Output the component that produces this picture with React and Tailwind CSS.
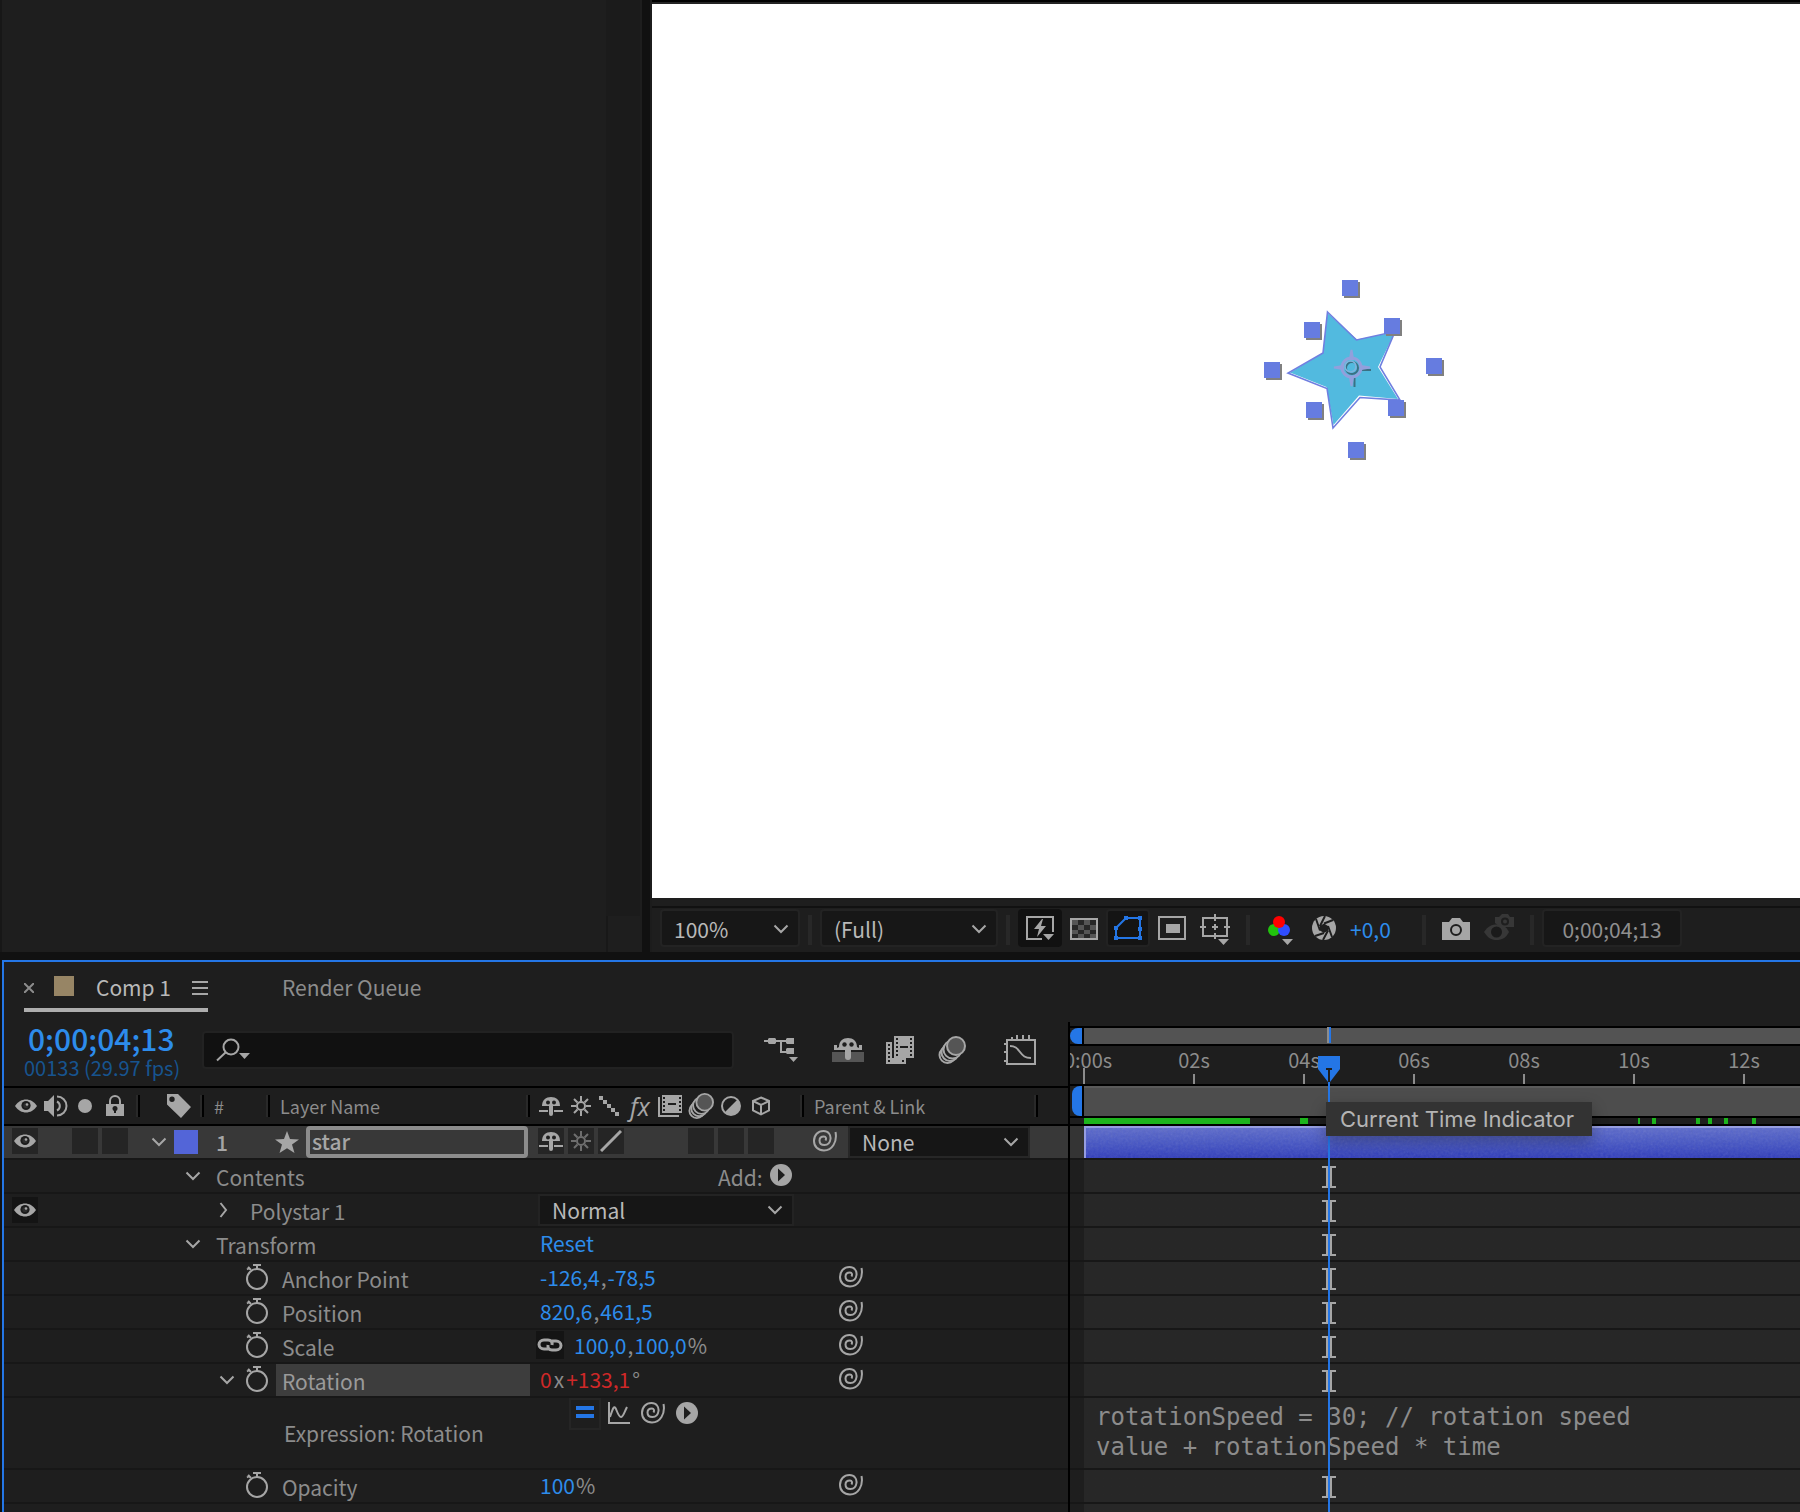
import React, {useState} from "react";

const handles = [
	[1342, 280], [1304, 322], [1384, 318], [1264, 362],
	[1426, 358], [1306, 402], [1388, 400], [1348, 442],
];

// cached frames on the timeline, [start, width]
const cachedFrames = [
	[0, 166], [216, 8], [554, 2], [568, 4], [612, 4], [624, 4], [640, 4], [668, 4],
];

const rulerLabels = ["0:00s", "02s", "04s", "06s", "08s", "10s", "12s"];

const Icon = ({w, h, className = "", children}) => (
	<svg width={w} height={h} viewBox={`0 0 ${w} ${h}`} fill="none" className={`shrink-0 ${className}`} aria-hidden="true">
		{children}
	</svg>
);

const ChevronDown = ({className = ""}) => (
	<Icon w={16} h={10} className={className}>
		<path d="M1.500 1.500 8 8l6.500-6.500" stroke="currentColor" strokeWidth="2"/>
	</Icon>
);

const ChevronRight = () => (
	<Icon w={10} h={16}>
		<path d="M1.500 1 7 8l-5.500 7" stroke="currentColor" strokeWidth="2"/>
	</Icon>
);

const Eye = () => (
	<Icon w={22} h={16}>
		<path d="M0 8C3 3.500 7 1.500 11 1.500S19 3.500 22 8c-3 4.500-7 6.500-11 6.500S3 12.500 0 8Z" fill="currentColor"/>
		<circle cx="11" cy="7.500" r="4.600" fill="#1c1c1c"/>
		<circle cx="11" cy="7.500" r="2.600" fill="#2e2e2e"/>
		<circle cx="12" cy="6.500" r="1.300" fill="currentColor"/>
	</Icon>
);

const Speaker = () => (
	<Icon w={24} h={24}>
		<path d="M0 7h4l6-6v22l-6-6H0Z" fill="currentColor"/>
		<path d="M13 2.500a9.500 9.500 0 0 1 0 19M13 7.500a5 5 0 0 1 0 9" stroke="currentColor" strokeWidth="2"/>
	</Icon>
);

const Lock = () => (
	<Icon w={18} h={22}>
		<path d="M4 10V6a5 5 0 0 1 10 0v4" stroke="currentColor" strokeWidth="2"/>
		<path d="M0 9h18v12H0Z" fill="currentColor"/>
		<circle cx="9" cy="13.500" r="2.500" fill="#1e1e1e"/>
		<path d="M8 14h2v4H8Z" fill="#1e1e1e"/>
	</Icon>
);

const Tag = () => (
	<Icon w={24} h={24}>
		<path fillRule="evenodd" d="M0 0h11l13 13-10 11L0 10.500ZM5 2.500a2.700 2.700 0 1 0 0 5.400 2.700 2.700 0 0 0 0-5.400Z" fill="currentColor"/>
	</Icon>
);

const Shy = () => (
	<Icon w={24} h={20}>
		<path d="M3 10C3 4 7 1 12 1s9 3 9 9Z" fill="currentColor"/>
		<circle cx="9" cy="6.500" r="2" fill="#1e1e1e"/>
		<circle cx="15" cy="6.500" r="2" fill="#1e1e1e"/>
		<path d="M10 9h4v9a2 2 0 0 1-4 0ZM0 14h9v2H0ZM15 14h9v2h-9Z" fill="currentColor"/>
	</Icon>
);

const Sun = () => (
	<Icon w={20} h={20}>
		<circle cx="10" cy="10" r="4" stroke="currentColor" strokeWidth="2"/>
		<path d="M10 0v5M10 15v5M0 10h5M15 10h5M3 3l3.500 3.500M13.500 13.500 17 17M17 3l-3.500 3.500M6.500 13.500 3 17" stroke="currentColor" strokeWidth="2"/>
	</Icon>
);

const Dots = () => (
	<Icon w={20} h={20}>
		<path d="M0 0h4v4H0ZM4 4h4v4H4ZM8 8h4v4H8ZM12 12h4v4h-4ZM16 16h4v4h-4Z" fill="currentColor"/>
	</Icon>
);

const FilmStack = () => (
	<Icon w={24} h={22}>
		<path d="M1 2v19h20" stroke="currentColor" strokeWidth="2"/>
		<path d="M4 0h20v18H4Z" fill="currentColor"/>
		<path d="M5 2h2v2H5ZM5 6h2v2H5ZM5 10h2v2H5ZM5 14h2v2H5ZM21 2h2v2h-2ZM21 6h2v2h-2ZM21 10h2v2h-2ZM21 14h2v2h-2ZM10 8h8v2h-8Z" fill="#1e1e1e"/>
	</Icon>
);

const MotionBlur = ({size = 28}) => (
	<svg width={size} height={size} viewBox="0 0 28 28" fill="none" className="shrink-0" aria-hidden="true">
		<circle cx="9.500" cy="19" r="8" fill="#1e1e1e" stroke="currentColor" strokeWidth="2"/>
		<circle cx="12" cy="16.500" r="8.500" fill="#1e1e1e" stroke="currentColor" strokeWidth="2"/>
		<circle cx="14.500" cy="13.500" r="9" fill="#1e1e1e" stroke="currentColor" strokeWidth="2"/>
		<circle cx="18" cy="10" r="9" fill="#555" stroke="currentColor" strokeWidth="2"/>
	</svg>
);

const HalfCircle = () => (
	<Icon w={22} h={22}>
		<circle cx="11" cy="11" r="9" stroke="currentColor" strokeWidth="2"/>
		<path d="M17.500 4.500A9.200 9.200 0 0 1 4.500 17.500Z" fill="currentColor"/>
	</Icon>
);

const Cube = () => (
	<Icon w={20} h={20}>
		<path d="m10 1.500 8 3.500v9.500L10 18.500 2 14.500V5ZM2 5l8 4 8-4M10 9v9.500" stroke="currentColor" strokeWidth="2"/>
	</Icon>
);

const Spiral = () => (
	<Icon w={24} h={22}>
		<path
			d="M22.500 2C24.500 12 19 20.500 11 20.500 5 20.500 1 16.500 1 11 1 5 5 1 10.500 1 15.500 1 18 5 17.500 9c-.500 4-3 6-6 6-3.500 0-5-2-5-4.500S8.500 6.500 11 6.500c2 0 2.500 2 1.500 4"
			stroke="currentColor" strokeWidth="2"
		/>
	</Icon>
);

const Play = () => (
	<Icon w={22} h={22}>
		<circle cx="11" cy="11" r="11" fill="currentColor"/>
		<path d="m8 4.500 7 6.500-7 6.500Z" fill="#1e1e1e"/>
	</Icon>
);

const Stopwatch = () => (
	<Icon w={22} h={26}>
		<circle cx="11" cy="15" r="10" stroke="currentColor" strokeWidth="2"/>
		<path d="M7 1h8M11 1v4M1 5.500 4 3.500M2 3l3 3" stroke="currentColor" strokeWidth="2"/>
	</Icon>
);

const StarGlyph = () => (
	<Icon w={24} h={22}>
		<path d="m12 0 3 8 9 .400-7 5.200L19.500 22 12 17.200 4.500 22 7 13.600 0 8.400 9 8Z" fill="currentColor"/>
	</Icon>
);

const ChainLink = () => (
	<Icon w={26} h={16}>
		<path d="M12 12H7a5 4.500 0 0 1 0-9h4c3 0 4.500 2 4 5M14 4h5a5 4.500 0 0 1 0 9h-4c-3 0-4.500-2-4-5" stroke="currentColor" strokeWidth="3"/>
	</Icon>
);

const Triangle = ({x, y}) => <path d={`M${x} ${y}h11l-5.500 6Z`} fill="currentColor"/>;

const Divider = () => <div className="h-[30px] w-1 shrink-0 bg-[#282828]"/>;

const HeaderDivider = () => <div className="h-[22px] w-[4px] shrink-0 border-r-2 border-l-2 border-l-[#292929] border-r-black"/>;

const Cell = ({label, className = "bg-[#252525]", children}) => (
	<button type="button" aria-label={label} className={`flex h-[26px] w-[26px] shrink-0 items-center justify-center ${className}`}>
		{children}
	</button>
);

const Select = ({label, options, className, text, chevron}) => (
	<div className={`relative shrink-0 ${className}`}>
		<select aria-label={label} className={`h-full w-full appearance-none bg-transparent pl-3 leading-[28px] text-[#b9b9b9] outline-none ${text}`}>
			{options.map((option) => <option key={option}>{option}</option>)}
		</select>
		<ChevronDown className={`pointer-events-none absolute ${chevron}`}/>
	</div>
);

const HotText = ({children}) => <button type="button" className="text-[#2d8ceb]">{children}</button>;

const Unit = ({children}) => <span className="px-px">{children}</span>;

const PickWhip = () => (
	<button type="button" aria-label="Expression pick whip" className="mb-[2px]">
		<Spiral/>
	</button>
);

const Row = ({toggle, name, value, link, tall}) => (
	<div className={`flex border-b-2 border-[#171717] ${tall ? "h-[72px]" : "h-[34px]"}`}>
		<div className="flex w-[134px] shrink-0 items-center pl-2">{toggle}</div>
		<div className="flex w-[396px] shrink-0 items-center">{name}</div>
		<div className="flex w-[268px] shrink-0 items-center pl-[6px]">{value}</div>
		<div className="flex flex-1 items-center pl-[37px]">{link}</div>
	</div>
);

const GroupName = ({children}) => (
	<div className="flex items-center pl-[47px]">
		<ChevronDown/>
		<span className="pt-[2px] pl-[15px]">{children}</span>
	</div>
);

const PropertyName = ({children, open, selected}) => (
	<div className="flex h-full w-full items-center pr-[4px] pl-[81px]">
		<span className="w-[27px] shrink-0">{open && <ChevronDown/>}</span>
		<button type="button" aria-label={`Animate ${children}`} className="mr-2 mb-[2px] shrink-0">
			<Stopwatch/>
		</button>
		<span className={`flex h-full flex-1 items-center pt-[2px] pl-[6px] ${selected ? "bg-[#3d3d3d] text-[#9a9a9a]" : ""}`}>{children}</span>
	</div>
);

const Viewer = () => (
	<section aria-label="Composition" className="flex min-w-0 flex-1 flex-col border-l-2 border-[#1c1c1c]">
		<div className="h-1 shrink-0 border-b-2 border-[#232323] bg-black"/>
		<div className="min-h-0 flex-1 overflow-hidden bg-white">
			<svg width="1148" height="894" viewBox="652 4 1148 894" role="img" aria-label="star">
				<path
					d="M1327.500 313 1357 339.500 1395 332 1378 367 1398 399 1359 395.500 1333.500 425 1326.500 387 1290 372.500 1323 353Z"
					fill="#52badf"
				/>
				<path
					d="M1327.500 312 1356.500 340 1395 331.500 1380 367 1400 400 1360 397.500 1333 428 1327 388.500 1288 373 1323 353Z"
					stroke="#6f7fe0" strokeWidth="1.600" fill="none"
				/>
				<g fill="none" stroke="#35606e" strokeWidth="2" opacity=".800">
					<circle cx="1352" cy="368" r="6"/>
					<path d="M1361 370h10M1354.500 378v9"/>
				</g>
				<g fill="none" stroke="#92a0dc">
					<circle cx="1351.500" cy="367.500" r="9.500" strokeWidth="3"/>
					<circle cx="1350.500" cy="366.500" r="5.500" strokeWidth="1.500" stroke="#7fb4dc"/>
				</g>
				<path d="M1350 359l1.500-9 1.500 9ZM1350 377l1.500 9 1.500-9ZM1343 366l-9 1.500 9 1.500ZM1361 366l9 1.500-9 1.500Z" fill="#92a0dc" stroke="#92a0dc" strokeWidth="2"/>
				{handles.map(([x, y]) => (
					<g key={`${x}-${y}`}>
						<rect x={x + 2} y={y + 2} width="16" height="16" fill="#808080"/>
						<rect x={x} y={y} width="16" height="16" fill="#667ce0"/>
					</g>
				))}
			</svg>
		</div>
		<div className="mt-2 flex h-[46px] shrink-0 items-center border-t-2 border-[#111] pl-2 text-[#a6a6a6]">
			<Select label="Magnification" options={["100%"]} text="pt-[2px]" className="mb-1 h-[38px] w-[140px] rounded border-2 border-[#232323] bg-[#171717]" chevron="top-[13px] right-[9px]"/>
			<div className="flex w-5 justify-center"><Divider/></div>
			<Select label="Resolution" options={["(Full)"]} text="pt-[2px]" className="mb-1 h-[38px] w-[178px] rounded border-2 border-[#232323] bg-[#171717]" chevron="top-[13px] right-[9px]"/>
			<div className="flex w-5 justify-center"><Divider/></div>
			<button type="button" aria-label="Fast previews" className="mb-1 flex h-[38px] w-[44px] items-center justify-center rounded bg-[#111]">
				<Icon w={28} h={26}>
					<path d="M16 24H1V2h26v15" stroke="currentColor" strokeWidth="2"/>
					<path d="m16 4-8 10h5l-2 8 9-11h-5l2-7Z" fill="currentColor"/>
					<Triangle x={17} y={19}/>
				</Icon>
			</button>
			<button type="button" aria-label="Toggle transparency grid" className="mb-[2px] ml-2">
				<Icon w={28} h={22}>
					<path d="M1 1h26v20H1Z" fill="#555" stroke="currentColor" strokeWidth="2"/>
					<path d="M8 2h6v5H8ZM20 2h6v5h-6ZM2 7h6v5H2ZM14 7h6v5h-6ZM8 12h6v4H8ZM20 12h6v4h-6ZM2 16h6v4H2ZM14 16h6v4h-6Z" fill="#272727"/>
				</Icon>
			</button>
			<button type="button" aria-label="Toggle mask and shape path visibility" className="mb-1 ml-2 flex h-[38px] w-[44px] items-center justify-center rounded border-2 border-[#222] bg-[#141414] text-[#2476e6]">
				<Icon w={28} h={26}>
					<path d="M12 3h14v20H2V13Z" stroke="currentColor" strokeWidth="2"/>
					<path d="M10 1h4v4h-4ZM24 1h4v4h-4ZM0 11h4v4H0ZM24 12h4v4h-4ZM0 21h4v4H0ZM24 21h4v4h-4Z" fill="currentColor"/>
				</Icon>
			</button>
			<button type="button" aria-label="Region of interest" className="mb-1 ml-2">
				<Icon w={28} h={24}>
					<path d="M1 1h26v22H1Z" stroke="currentColor" strokeWidth="2"/>
					<path d="M8 8h14v9H8Z" fill="currentColor"/>
				</Icon>
			</button>
			<button type="button" aria-label="Grid and guide options" className="ml-[14px]">
				<Icon w={30} h={32}>
					<path d="M3 4h24v18H3ZM15 0v7M15 19v6M0 13h6M24 13h6M12 13h6M15 10v6" stroke="currentColor" strokeWidth="2"/>
					<Triangle x={18} y={25}/>
				</Icon>
			</button>
			<div className="mx-4"><Divider/></div>
			<button type="button" aria-label="Show channel" className="ml-[2px]">
				<Icon w={26} h={30}>
					<circle cx="6" cy="15" r="6" fill="#21c20d"/>
					<circle cx="16" cy="15" r="6" fill="#2f4dff"/>
					<circle cx="11" cy="7" r="6" fill="#f00"/>
					<Triangle x={14} y={24}/>
				</Icon>
			</button>
			<button type="button" aria-label="Reset exposure" className="mb-1 ml-[18px]">
				<Icon w={24} h={24}>
					<circle cx="12" cy="12" r="12" fill="currentColor"/>
					<path d="M12 7.500 16 10v4.500L12 17l-4-2.500V10Z" fill="#1e1e1e"/>
					<path d="M12 7.500 21 4M16 10l4 11M16 14.500 11 24M12 17l-9 3M8 14.500 4 3M8 10l5-10" stroke="#1e1e1e" strokeWidth="2"/>
				</Icon>
			</button>
			<div className="mb-[2px] ml-[14px] w-[72px]"><HotText>+0,0</HotText></div>
			<Divider/>
			<button type="button" aria-label="Take snapshot" className="mb-[2px] ml-4">
				<Icon w={28} h={22}>
					<path d="M0 4h7l3-4h8l3 4h7v18H0Z" fill="currentColor"/>
					<circle cx="14" cy="12" r="5" stroke="#1e1e1e" strokeWidth="2"/>
				</Icon>
			</button>
			<button type="button" aria-label="Show snapshot" className="mb-1 ml-[14px] text-[#373737]">
				<Icon w={30} h={28}>
					<path d="M0 18c4-6 8-7.500 13-7.500S22 12 25 18c-3 6-7 8-12.500 8S4 24 0 18Z" fill="currentColor"/>
					<path d="M11 3h4l3-3h6l2 3h4v10H16l-5-4Z" fill="currentColor"/>
					<circle cx="12.500" cy="18" r="5.500" fill="#1a1a1a"/>
					<circle cx="21" cy="7.500" r="3" stroke="#1e1e1e" strokeWidth="2"/>
				</Icon>
			</button>
			<div className="mr-2 ml-4"><Divider/></div>
			<button type="button" className="mb-1 h-[38px] w-[140px] rounded border-2 border-[#232323] bg-[#171717] pt-[2px] text-[#8f8f8f]">0;00;04;13</button>
		</div>
	</section>
);

const Outline = () => {
	const [layerName, setLayerName] = useState("star");

	return (
		<div className="w-[1064px] shrink-0">
			<div className="flex h-[66px] items-start border-b-2 border-black pl-5">
				<div className="flex w-[178px] flex-col items-start pt-px">
					<button type="button" className="pl-1 text-[30px] leading-[30px] font-medium text-[#2d8ceb]">0;00;04;13</button>
					<span className="text-[20px] leading-[30px] text-[#17548f]">00133 (29.97 fps)</span>
				</div>
				<label className="mt-[9px] flex h-[38px] w-[532px] items-center rounded border-2 border-[#222] bg-[#111] pl-3 text-[#a6a6a6]">
					<Icon w={34} h={24}>
						<circle cx="15" cy="9" r="7.500" stroke="currentColor" strokeWidth="2"/>
						<path d="M9.500 14.500 1 22.500" stroke="currentColor" strokeWidth="2"/>
						<Triangle x={23} y={15}/>
					</Icon>
					<input type="search" aria-label="Search layers" className="min-w-0 flex-1 bg-transparent outline-none"/>
				</label>
				<div className="mt-[13px] flex items-center text-[#a6a6a6]">
					<button type="button" aria-label="Composition mini-flowchart" className="ml-[30px]">
						<Icon w={34} h={26}>
							<path d="M0 4h24M17 4v11h6" stroke="currentColor" strokeWidth="2"/>
							<path d="M5 1h6l1 1v4l-1 1H5L4 6V2ZM23 1h7v6h-7l-1-1V2ZM23 11h7v6h-7l-1-1v-4Z" fill="currentColor"/>
							<path d="M25 20h9l-4.500 5Z" fill="currentColor"/>
						</Icon>
					</button>
					<button type="button" aria-label="Hide shy layers" className="ml-[34px]">
						<Icon w={32} h={26}>
							<path d="M0 15h32v10H0Z" fill="#555"/>
							<path d="M7 10C7 4 11 1 16 1s9 3 9 9l2 1V8h3v5H2V8h3v3Z" fill="currentColor"/>
							<circle cx="12.500" cy="7.500" r="2.200" fill="#1e1e1e"/>
							<circle cx="19.500" cy="7.500" r="2.200" fill="#1e1e1e"/>
							<path d="M13 12h6v8a3 3 0 0 1-6 0Z" fill="currentColor"/>
						</Icon>
					</button>
					<button type="button" aria-label="Frame blending" className="ml-[22px]">
						<Icon w={28} h={28}>
							<path d="M0 6h6v16h14v6H0Z" fill="currentColor"/>
							<path d="M8 0h20v22H8Z" fill="currentColor"/>
							<path d="M10 2h2v2h-2ZM10 6h2v2h-2ZM10 10h2v2h-2ZM10 14h2v2h-2ZM10 18h2v2h-2ZM24 2h2v2h-2ZM24 6h2v2h-2ZM24 10h2v2h-2ZM24 14h2v2h-2ZM24 18h2v2h-2ZM14 10h8v2h-8ZM2 8h2v2H2ZM2 12h2v2H2ZM2 16h2v2H2ZM2 20h2v2H2ZM2 24h2v2H2ZM16 24h2v2h-2Z" fill="#1e1e1e"/>
						</Icon>
					</button>
					<button type="button" aria-label="Motion blur" className="ml-[24px]"><MotionBlur/></button>
					<button type="button" aria-label="Graph editor" className="ml-[38px]">
						<Icon w={32} h={30}>
							<path d="M3 5h28v24H3ZM8 2v3M13 0v5M19 0v5M25 0v5M0 9h3M0 17h3M0 26h3" stroke="currentColor" strokeWidth="2"/>
							<path d="M6 11c5 0 7 2 10 6s5 6 11 6" stroke="currentColor" strokeWidth="2"/>
						</Icon>
					</button>
				</div>
			</div>

			<div className="flex h-[38px] items-center border-b-2 border-black text-[18px] text-[#8c8c8c]">
				<div className="flex w-[132px] shrink-0 items-center pl-[11px] text-[#a6a6a6]">
					<Eye/>
					<span className="ml-[7px]"><Speaker/></span>
					<span className="ml-[10px] h-[14px] w-[14px] rounded-full bg-[#a6a6a6]"/>
					<span className="ml-[14px]"><Lock/></span>
				</div>
				<HeaderDivider/>
				<div className="w-[60px] pl-[27px] text-[#a6a6a6]"><Tag/></div>
				<HeaderDivider/>
				<div className="w-[62px] pl-[10px]">#</div>
				<HeaderDivider/>
				<div className="w-[256px] pl-[10px]">Layer Name</div>
				<HeaderDivider/>
				<div className="flex w-[270px] items-center pl-[9px] text-[#a6a6a6]">
					<Shy/>
					<span className="ml-2"><Sun/></span>
					<span className="ml-2"><Dots/></span>
					<span className="ml-[11px] w-[22px] font-['Open_Sans',sans-serif] text-[25px] leading-[30px] italic">fx</span>
					<span className="ml-[6px]"><FilmStack/></span>
					<span className="ml-[6px]"><MotionBlur size={26}/></span>
					<span className="ml-[6px]"><HalfCircle/></span>
					<span className="ml-[9px]"><Cube/></span>
				</div>
				<HeaderDivider/>
				<div className="w-[230px] pl-[10px]">Parent &amp; Link</div>
				<HeaderDivider/>
			</div>

			<div className="flex h-[34px] border-b-2 border-[#171717] bg-[#383838] text-[#a6a6a6]">
				<div className="flex w-[134px] shrink-0 pt-[2px] pl-2">
					<Cell label="Video"><Eye/></Cell>
					<Cell label="Solo" className="ml-[34px] bg-[#252525]"/>
					<Cell label="Lock" className="ml-1 bg-[#252525]"/>
				</div>
				<div className="flex w-[396px] shrink-0 items-center pl-[13px]">
					<button type="button" aria-label="Collapse layer"><ChevronDown/></button>
					<span className="ml-[7px] h-6 w-6 bg-[#5365d8]"/>
					<span className="w-[77px] pl-[18px] font-medium">1</span>
					<StarGlyph/>
					<input
						aria-label="Layer name"
						value={layerName}
						onChange={(e) => setLayerName(e.target.value)}
						className="ml-[7px] h-8 w-[222px] rounded-sm border-4 border-[#8c8c8c] bg-transparent pb-[2px] pl-[2px] font-medium outline-none"
					/>
				</div>
				<div className="flex w-[268px] shrink-0 gap-1 pt-[2px] pl-1">
					<Cell label="Shy"><Shy/></Cell>
					<Cell label="Continuously rasterize" className="bg-[#252525] text-[#6e6e6e]"><Sun/></Cell>
					<Cell label="Quality">
						<Icon w={22} h={22}><path d="M1 21 21 1" stroke="currentColor" strokeWidth="3"/></Icon>
					</Cell>
					<Cell label="Motion blur" className="ml-[60px] bg-[#252525]"/>
					<Cell label="Adjustment layer"/>
					<Cell label="3D layer"/>
				</div>
				<div className="flex flex-1 items-center pl-[11px]">
					<button type="button" aria-label="Parent pick whip" className="mb-[2px]"><Spiral/></button>
					<Select label="Parent" options={["None"]} text="pb-1" className="ml-[11px] h-8 w-[182px] border-2 border-[#272727] bg-[#161616]" chevron="top-[9px] right-[9px]"/>
				</div>
			</div>

			<div className="text-[#8c8c8c] [&_svg]:text-[#a6a6a6]">
				<Row
					name={<GroupName>Contents</GroupName>}
					value={
						<div className="flex items-center pl-[178px]">
							<span className="w-[52px] pt-[2px]">Add:</span>
							<button type="button" aria-label="Add" className="mb-[2px]"><Play/></button>
						</div>
					}
				/>
				<Row
					toggle={<Cell label="Polystar visibility" className="bg-[#141414]"><Eye/></Cell>}
					name={<div className="flex items-center pl-[81px]"><ChevronRight/><span className="pt-[2px] pl-[21px]">Polystar 1</span></div>}
					value={<Select label="Blend mode" options={["Normal"]} text="pb-1" className="-ml-[2px] h-8 w-[256px] border-2 border-[#232323] bg-[#161616]" chevron="top-[9px] right-[9px]"/>}
				/>
				<Row
					name={<GroupName>Transform</GroupName>}
					value={<div className="pb-[2px]"><HotText>Reset</HotText></div>}
				/>
				<Row
					name={<PropertyName>Anchor Point</PropertyName>}
					value={<div className="pb-[2px]"><HotText>-126,4</HotText><Unit>,</Unit><HotText>-78,5</HotText></div>}
					link={<PickWhip/>}
				/>
				<Row
					name={<PropertyName>Position</PropertyName>}
					value={<div className="pb-[2px]"><HotText>820,6</HotText><Unit>,</Unit><HotText>461,5</HotText></div>}
					link={<PickWhip/>}
				/>
				<Row
					name={<PropertyName>Scale</PropertyName>}
					value={
						<div className="-ml-1 flex items-center pb-[2px]">
							<button type="button" aria-label="Constrain proportions" className="mr-[10px] flex h-7 w-7 items-center justify-center bg-[#141414]"><ChainLink/></button>
							<HotText>100,0</HotText><Unit>,</Unit><HotText>100,0</HotText><Unit>%</Unit>
						</div>
					}
					link={<PickWhip/>}
				/>
				<Row
					name={<PropertyName open selected>Rotation</PropertyName>}
					value={
						<div className="pb-[2px]">
							<button type="button" className="text-[#cf2828]">0</button>
							<span className="px-[2px]">x</span>
							<button type="button" className="text-[#cf2828]">+133,1</button>
							<span className="px-[2px]">°</span>
						</div>
					}
					link={<PickWhip/>}
				/>
				<Row
					tall
					name={<span className="pl-[146px]">Expression: Rotation</span>}
					value={
						<div className="flex items-center self-start pl-[29px]">
							<button type="button" aria-label="Enable expression" className="flex h-8 w-8 items-center justify-center border-2 border-[#252525] pb-1">
								<Icon w={18} h={14}><path d="M0 1h18v4H0ZM0 9h18v4H0Z" fill="#2476e6"/></Icon>
							</button>
							<button type="button" aria-label="Show post-expression graph" className="mb-[2px] ml-[7px]">
								<Icon w={22} h={22}>
									<path d="M1 0v21h21" stroke="currentColor" strokeWidth="2"/>
									<path d="M2 15c3-9 4-12 6-8 2 5 3 8 5 8 2 0 3-4 6-10" stroke="currentColor" strokeWidth="2"/>
								</Icon>
							</button>
							<button type="button" aria-label="Expression pick whip" className="mb-[2px] ml-[11px]"><Spiral/></button>
							<button type="button" aria-label="Expression language menu" className="mb-[2px] ml-[11px]"><Play/></button>
						</div>
					}
				/>
				<Row
					name={<PropertyName>Opacity</PropertyName>}
					value={<div className="pb-[2px]"><HotText>100</HotText><Unit>%</Unit></div>}
					link={<PickWhip/>}
				/>
				<div className="h-2"/>
			</div>
		</div>
	);
};

const KeyRow = () => (
	<div className="h-[34px] border-b-2 border-[#171717] pt-[6px] pl-[252px]">
		<Icon w={14} h={22}>
			<path d="M0 0h14v2h-4v18h4v2H0v-2h4V2H0Z" fill="#a6a6a6"/>
		</Icon>
	</div>
);

const Tracks = () => (
	<div className="relative min-w-0 flex-1 overflow-hidden border-l-2 border-black pt-1">
		<div className="flex h-5 border-y-2 border-black">
			<div className="w-[14px] shrink-0 border-r-2 border-black"><div className="h-full rounded-l-full bg-[#2476e6]"/></div>
			<div className="flex-1 bg-[#535353]"/>
		</div>
		<div className="flex h-[38px] text-[20px] text-[#8c8c8c]">
			<div className="-ml-[41px] flex">
				{rulerLabels.map((label, i) => (
					<div key={label} className="flex w-[110px] shrink-0 flex-col items-center justify-between">
						<span className={i === 0 ? "h-[22px] pl-2 leading-[28px]" : "leading-[28px]"}>{label}</span>
						<span className={i === 0 ? "h-4 w-[2px] bg-[#8c8c8c]" : "h-[10px] w-[2px] bg-[#8c8c8c]"}/>
					</div>
				))}
			</div>
		</div>
		<div className="flex h-[34px] border-y-2 border-black">
			<div className="w-[14px] shrink-0 border-r-2 border-black pl-[2px]"><div className="h-full rounded-l-lg bg-[#2476e6]"/></div>
			<div className="flex-1 border-t-2 border-[#5a5a5a] bg-[#4d4d4d]"/>
		</div>
		<div className="h-2 border-b-2 border-black pl-[14px]">
			<svg width="716" height="6" className="block" aria-hidden="true">
				{cachedFrames.map(([x, w]) => <rect key={x} x={x} width={w} height="6" fill="#1db41d"/>)}
			</svg>
		</div>
		<div className="flex h-[34px] border-b-2 border-[#171717]">
			<div className="w-[14px] shrink-0 bg-[#343434]"/>
			<div className="flex-1 border-t-2 border-l-2 border-[#959de0] bg-linear-to-b from-[#5c6acb] to-[#303cbc]">
				<svg width="100%" height="30" className="block opacity-15" aria-hidden="true">
					<filter id="grain">
						<feTurbulence type="fractalNoise" baseFrequency="0.4" numOctaves="2"/>
						<feColorMatrix type="saturate" values="0"/>
					</filter>
					<rect width="100%" height="30" filter="url(#grain)"/>
				</svg>
			</div>
		</div>
		<div className="bg-linear-to-r from-[#1e1e1e] from-[14px] to-[#272727] to-[14px]">
			{["Contents", "Polystar", "Transform", "Anchor", "Position", "Scale", "Rotation"].map((row) => <KeyRow key={row}/>)}
			<div className="h-[72px] border-b-2 border-[#171717] pt-1 pl-[26px]">
				<textarea
					aria-label="Expression"
					rows={2}
					spellCheck={false}
					defaultValue={"rotationSpeed = 30; // rotation speed\nvalue + rotationSpeed * time"}
					className="block w-full resize-none overflow-hidden bg-transparent font-['DejaVu_Sans_Mono',monospace] text-[24px] leading-[30px] text-[#8c8c8c] outline-none"
				/>
			</div>
			<KeyRow/>
			<div className="h-2"/>
		</div>

		{/* current time indicator */}
		<div className="absolute top-[5px] left-[257px] h-4 w-1 border-r-2 border-l-2 border-l-[#8c8c8c] border-r-[#2476e6]"/>
		<div className="absolute top-[60px] bottom-0 left-[258px] w-[2px] bg-[#2476e6]"/>
		<div className="absolute top-[34px] left-[248px]">
			<Icon w={22} h={28}>
				<path d="M0 0h22v13l-10 13h-2L0 13Z" fill="#2476e6"/>
				<path d="M8 13h6M11 13v13" stroke="#1e1e1e" strokeWidth="2"/>
			</Icon>
		</div>
		<div role="tooltip" className="absolute top-20 left-[256px] bg-[#333] pr-[18px] pl-[14px] font-['Inter',sans-serif] text-[22px] leading-[34px] whitespace-nowrap text-[#b4b4b4] shadow-[0_6px_16px_rgba(0,0,0,0.3)]">
			Current Time Indicator
		</div>
	</div>
);

const App = () => {
	return (
		<div className="flex h-screen flex-col overflow-hidden bg-[#111] font-['Noto_Sans_CJK_SC',sans-serif] text-[21px] leading-[28px]">
			<div className="flex min-h-0 flex-1 bg-[#1e1e1e]">
				<aside className="flex w-[642px] shrink-0 justify-end border-l-2 border-[#171717]">
					<div className="flex w-9 flex-col">
						<div className="flex-1 border-r-2 border-[#1e1e1e] bg-[#1b1b1b]"/>
						<div className="h-9 border-l-2 border-[#181818]"/>
					</div>
				</aside>
				<div className="w-2 shrink-0 bg-[#111]"/>
				<Viewer/>
			</div>

			<section aria-label="Timeline" className="mt-2 ml-[2px] shrink-0 border-t-2 border-l-2 border-[#2476e6] bg-[#1e1e1e]">
				<div className="flex h-[60px] items-start pt-[6px] pl-5">
					<div className="flex h-[44px] w-[184px] items-center border-b-4 border-[#aeaeae]">
						<button type="button" aria-label="Close tab" className="text-[#8c8c8c]">
							<Icon w={10} h={10}><path d="m0 0 10 10M10 0 0 10" stroke="currentColor" strokeWidth="2"/></Icon>
						</button>
						<span className="mb-1 ml-5 h-5 w-5 bg-[#978565]"/>
						<button type="button" className="mb-[2px] ml-[22px] text-[#b9b9b9]">Comp 1</button>
						<button type="button" aria-label="Panel menu" className="ml-auto text-[#a6a6a6]">
							<Icon w={16} h={14}><path d="M0 1h16M0 7h16M0 13h16" stroke="currentColor" strokeWidth="2"/></Icon>
						</button>
					</div>
					<button type="button" className="ml-[74px] h-[38px] text-[#8c8c8c]">Render Queue</button>
				</div>
				<div className="flex">
					<Outline/>
					<Tracks/>
				</div>
			</section>
		</div>
	);
};

export default App;
